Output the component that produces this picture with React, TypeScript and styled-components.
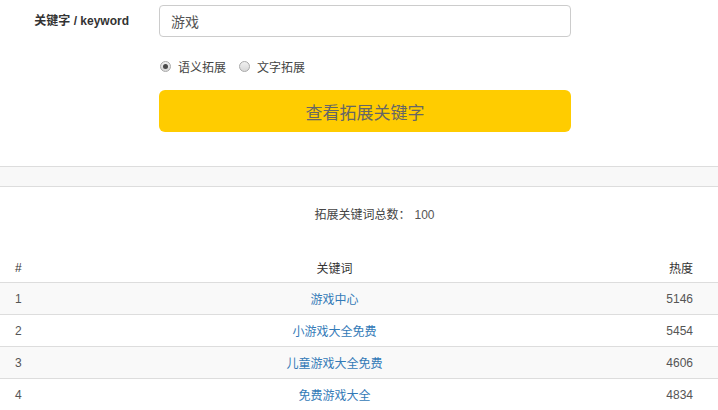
import React from "react";
import styled, { createGlobalStyle } from "styled-components";

const Global = createGlobalStyle`
  html, body { margin: 0; padding: 0; background: #fff; }
  body {
    font-family: "Liberation Sans", "Noto Sans CJK SC", sans-serif;
    color: #333;
    font-size: 12px;
  }
`;

const Page = styled.div`
  width: 718px;
  display: flex;
  flex-direction: column;
`;

const FormGrid = styled.div`
  display: grid;
  grid-template-columns: 144px 412px;
  column-gap: 15px;
  row-gap: 0;
  padding-top: 5px;
`;

const Label = styled.label`
  text-align: right;
  padding-right: 15px;
  font-weight: bold;
  font-size: 12px;
  color: #333;
  line-height: 32px;
  height: 32px;
`;

const Input = styled.input`
  box-sizing: border-box;
  width: 412px;
  height: 32px;
  border: 1px solid #ccc;
  border-radius: 4px;
  padding: 0 11px;
  font-family: inherit;
  font-size: 14px;
  color: #555;
  outline: none;
  background: #fff;
`;

const Empty = styled.div``;

const RadioRow = styled.div`
  display: flex;
  align-items: center;
  gap: 12px;
  height: 20px;
  margin-top: 19px;
`;

const RadioItem = styled.label`
  display: flex;
  align-items: center;
  gap: 7px;
  font-size: 12px;
  color: #444;
`;

const RadioDot = styled.span<{ $checked?: boolean }>`
  box-sizing: border-box;
  width: 11px;
  height: 11px;
  border-radius: 50%;
  border: 1px solid #a9a9a9;
  background: linear-gradient(#f0f0f0, #d8d8d8);
  display: flex;
  align-items: center;
  justify-content: center;
  margin-left: 1px;
  &::after {
    content: "";
    width: 5px;
    height: 5px;
    border-radius: 50%;
    background: ${(p) => (p.$checked ? "#4a4a4a" : "transparent")};
  }
`;

const SubmitButton = styled.button`
  box-sizing: border-box;
  margin-top: 14px;
  width: 412px;
  height: 42px;
  border: none;
  border-radius: 6px;
  background: #ffcc00;
  color: #666;
  font-family: inherit;
  font-size: 17px;
  cursor: pointer;
`;

const Divider = styled.div`
  margin-top: 34px;
  height: 19px;
  background: #f8f8f8;
  border-top: 1px solid #ddd;
  border-bottom: 1px solid #ddd;
`;

const Summary = styled.div`
  padding-left: 31px;
  text-align: center;
  margin-top: 20px;
  height: 16px;
  line-height: 16px;
  font-size: 12px;
  color: #444;
`;

const Count = styled.span`
  color: #555;
  margin-left: 4px;
`;

const Table = styled.table`
  margin-top: 30px;
  width: 718px;
  border-collapse: collapse;
  font-size: 12px;
`;

const Th = styled.th<{ $align: "left" | "center" | "right" }>`
  font-weight: normal;
  color: #333;
  height: 29px;
  padding: 0;
  text-align: ${(p) => p.$align};
  border-bottom: 1px solid #ddd;
  &:first-child { padding-left: 15px; }
  &:last-child { padding-right: 25px; }
`;

const Tr = styled.tr<{ $striped: boolean }>`
  background: ${(p) => (p.$striped ? "#f9f9f9" : "#fff")};
  border-top: 1px solid #ddd;
`;

const Td = styled.td<{ $align: "left" | "center" | "right" }>`
  height: 31px;
  padding: 0;
  color: #555;
  text-align: ${(p) => p.$align};
  &:first-child { padding-left: 15px; }
  &:last-child { padding-right: 25px; }
`;

const KeywordLink = styled.a`
  color: #337ab7;
  text-decoration: none;
`;

const rows = [
  { id: 1, kw: "游戏中心", heat: 5146 },
  { id: 2, kw: "小游戏大全免费", heat: 5454 },
  { id: 3, kw: "儿童游戏大全免费", heat: 4606 },
  { id: 4, kw: "免费游戏大全", heat: 4834 },
];

export default function App() {
  return (
    <Page>
      <Global />
      <FormGrid>
        <Label>关键字 / keyword</Label>
        <Input defaultValue="游戏" />
        <Empty />
        <RadioRow>
          <RadioItem>
            <RadioDot $checked />
            语义拓展
          </RadioItem>
          <RadioItem>
            <RadioDot />
            文字拓展
          </RadioItem>
        </RadioRow>
        <Empty />
        <SubmitButton>查看拓展关键字</SubmitButton>
      </FormGrid>
      <Divider />
      <Summary>
        拓展关键词总数：<Count>100</Count>
      </Summary>
      <Table>
        <colgroup>
          <col style={{ width: 100 }} />
          <col />
          <col style={{ width: 149 }} />
        </colgroup>
        <thead>
          <tr>
            <Th $align="left">#</Th>
            <Th $align="center">关键词</Th>
            <Th $align="right">热度</Th>
          </tr>
        </thead>
        <tbody>
          {rows.map((r, i) => (
            <Tr key={r.id} $striped={i % 2 === 0}>
              <Td $align="left">{r.id}</Td>
              <Td $align="center">
                <KeywordLink href="#">{r.kw}</KeywordLink>
              </Td>
              <Td $align="right">{r.heat}</Td>
            </Tr>
          ))}
        </tbody>
      </Table>
    </Page>
  );
}
